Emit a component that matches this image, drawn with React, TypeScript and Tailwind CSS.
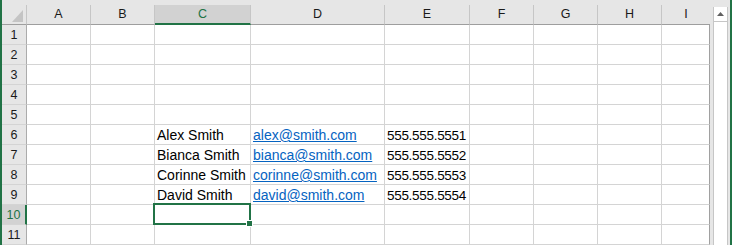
import React from "react"

const cols = [
  { key: "A", w: "w-[64px]" },
  { key: "B", w: "w-[64px]" },
  { key: "C", w: "w-[96px]" },
  { key: "D", w: "w-[134px]" },
  { key: "E", w: "w-[85px]" },
  { key: "F", w: "w-[64px]" },
  { key: "G", w: "w-[64px]" },
  { key: "H", w: "w-[64px]" },
  { key: "I", w: "w-[48px]" },
]

const people: Record<number, { name: string; email: string; phone: string }> = {
  6: { name: "Alex Smith", email: "alex@smith.com", phone: "555.555.5551" },
  7: { name: "Bianca Smith", email: "bianca@smith.com", phone: "555.555.5552" },
  8: { name: "Corinne Smith", email: "corinne@smith.com", phone: "555.555.5553" },
  9: { name: "David Smith", email: "david@smith.com", phone: "555.555.5554" },
}

const rows = [1, 2, 3, 4, 5, 6, 7, 8, 9, 10, 11]

const HeaderRow = () => (
  <div className="flex h-[20px]">
    <div className="relative w-[25px] h-[20px] border-r border-b border-r-[#c6c6c6] border-b-[#9e9e9e]">
      <svg width="24" height="19" className="absolute left-0 top-0">
        <polygon points="10,17 21,17 21,5" fill="#c4c4c4" />
      </svg>
    </div>
    {cols.map((c) => {
      const active = c.key === "C"
      const last = c.key === "I"
      return (
        <div
          key={c.key}
          className={`${c.w} h-[20px] flex justify-center pt-[2px] text-[12.5px] leading-[15px] ${
            active
              ? "bg-[#d2d2d2] border-b-2 border-b-[#217346] text-[#217346] border-r border-r-[#c6c6c6]"
              : last
              ? "border-b border-b-[#9e9e9e] text-[#1a1a1a]"
              : "border-b border-b-[#9e9e9e] border-r border-r-[#c6c6c6] text-[#1a1a1a]"
          }`}
        >
          {c.key}
        </div>
      )
    })}
  </div>
)

const Cell = ({ col, row }: { col: (typeof cols)[number]; row: number }) => {
  const p = people[row]
  const last = col.key === "I"
  let content: React.ReactNode = null
  if (p && col.key === "C") content = <span className="text-black text-[14px] whitespace-nowrap">{p.name}</span>
  if (p && col.key === "D")
    content = <span className="text-[#0563c1] text-[14px] underline whitespace-nowrap">{p.email}</span>
  if (p && col.key === "E")
    content = <span className="text-black text-[13.5px] tracking-[-0.3px] whitespace-nowrap">{p.phone}</span>
  const selected = row === 10 && col.key === "C"
  return (
    <div
      className={`relative ${col.w} h-[20px] bg-white border-b border-b-[#d4d4d4] border-r pl-[2px] pt-[3px] text-[13px] leading-[15px] ${
        last ? "border-r-[#a0a0a0]" : "border-r-[#d4d4d4]"
      }`}
    >
      {content}
      {selected && (
        <div className="absolute -left-[2px] -top-[2px] w-[98px] h-[22px] border-2 border-[#217346] z-10">
          <div className="absolute left-[91px] top-[15px] w-[7px] h-[7px] bg-[#217346] border border-white" />
        </div>
      )}
    </div>
  )
}

const BodyRow = ({ row }: { row: number }) => {
  const active = row === 10
  return (
    <div className="flex h-[20px]">
      <div
        className={`w-[25px] h-[20px] flex justify-center pt-[3px] text-[12.5px] leading-[15px] border-b border-b-[#d4d4d4] ${
          active
            ? "bg-[#d2d2d2] text-[#217346] border-r-2 border-r-[#217346]"
            : "bg-[#e6e6e6] text-[#1a1a1a] border-r border-r-[#ababab]"
        }`}
      >
        {row}
      </div>
      {cols.map((c) => (
        <Cell key={c.key} col={c} row={row} />
      ))}
    </div>
  )
}

export default function App() {
  return (
    <div className="flex w-[732px] h-[245px] overflow-hidden bg-[#e6e6e6] font-['Liberation_Sans',Arial,sans-serif]">
      <div className="w-[2px] h-full bg-[#217346]" />
      <div className="flex flex-col w-[708px]">
        <div className="h-[5px]" />
        <HeaderRow />
        {rows.map((r) => (
          <BodyRow key={r} row={r} />
        ))}
      </div>
      <div className="w-[3px]" />
      <div className="flex flex-col w-[15px] mt-[7px] bg-white border-x border-x-[#c6c6c6]">
        <div className="h-[15px] flex items-center justify-center border-b border-b-[#c6c6c6]">
          <svg width="7" height="4" viewBox="0 0 7 4">
            <polygon points="0,4 7,4 3.5,0" fill="#606060" />
          </svg>
        </div>
      </div>
      <div className="w-[2px]" />
      <div className="w-[2px] h-full bg-[#217346]" />
    </div>
  )
}
